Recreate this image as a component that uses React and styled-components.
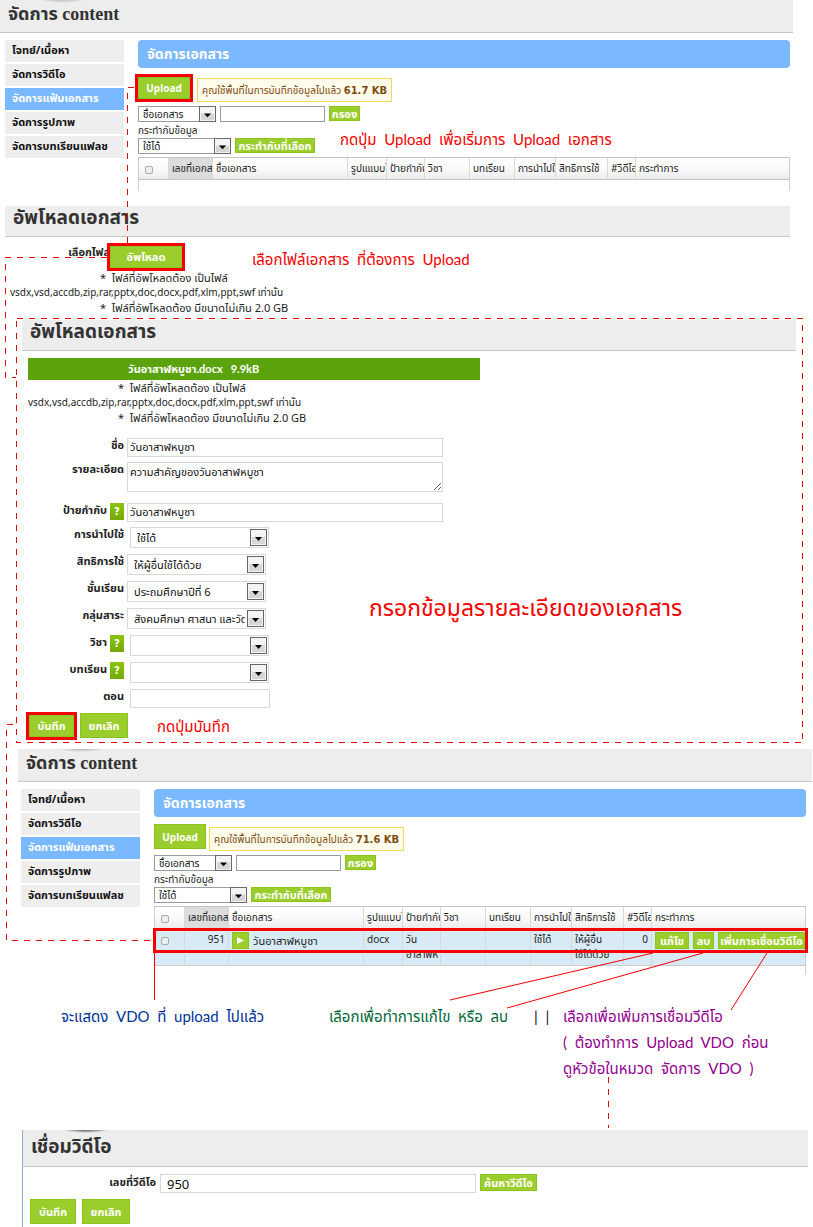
import React from 'react';
import styled, { createGlobalStyle, css } from 'styled-components';

const GlobalStyle = createGlobalStyle`
  *, *::before, *::after { box-sizing: border-box; }
  body { margin: 0; background: #fff; color: #222; font: 10px/15px "Noto Sans", "Noto Sans Thai", sans-serif; }
  button, input, select, textarea { font: inherit; color: #111; margin: 0; }
  h1, h2, p, ul { margin: 0; padding: 0; }
`;

const Page = styled.main`
  position: relative;
  overflow: hidden;
`;

const Heading = styled.h1`
  position: relative;
  overflow: hidden;
  height: ${(p) => p.$height || 31}px;
  padding: 0 8px;
  border-bottom: 1px solid #c8c8c8;
  background: #ededed;
  color: #333;
  font: bold ${(p) => p.$size || 19}px/${(p) => p.$line || 24}px "Liberation Serif", "Noto Sans Thai", serif;
  ${(p) => p.$shade && css`
    &::before {
      content: '';
      position: absolute;
      top: -6px;
      left: 38px;
      width: 50px;
      height: 9px;
      border-radius: 50%;
      background: radial-gradient(closest-side, ${p.$shade}, transparent);
    }
  `}
`;

const Manager = styled.section`
  margin: ${(p) => (p.$second ? '11px 1px 0 18px' : '0 20px 0 0')};
`;

const ManagerBody = styled.div`
  display: flex;
  align-items: flex-start;
  gap: 14px;
  padding: ${(p) => (p.$second ? '7px 6px 0 3px' : '7px 0 0 5px')};
  margin-right: ${(p) => (p.$second ? 0 : 3)}px;
`;

const Nav = styled.nav`
  flex: 0 0 119px;
  display: flex;
  flex-direction: column;
  gap: 2px;
`;

const NavLink = styled.a`
  height: 22px;
  padding: 0 7px;
  background: ${(p) => (p.$active ? '#7ab8ff' : '#eee')};
  color: ${(p) => (p.$active ? '#fff' : '#111')};
  font-size: 11px;
  font-weight: bold;
  line-height: 20px;
  text-decoration: none;
  white-space: nowrap;
`;

const Main = styled.div`
  flex: 1;
  min-width: 0;
`;

const Title = styled.h2`
  height: 28px;
  padding: 0 9px;
  border-radius: 4px;
  background: #7ab8ff;
  color: #fff;
  font-size: 14px;
  line-height: 27px;
`;

const UploadRow = styled.div`
  display: flex;
  align-items: flex-start;
  gap: 3px;
  padding-top: 7px;
`;

const Button = styled.button`
  flex: none;
  width: ${(p) => p.$width}px;
  height: ${(p) => (p.$small ? 15 : 25)}px;
  padding: 0;
  border: 1px solid #8bc41d;
  background: #9bcd2d;
  color: #fff;
  font-size: 11px;
  font-weight: bold;
  line-height: ${(p) => (p.$small ? 12 : 22)}px;
  white-space: nowrap;
  ${(p) => p.$marked && css`
    height: 22px;
    line-height: 20px;
    box-shadow: 0 0 0 3px #f60000;
  `}
`;

const UploadButton = styled(Button)`
  margin-top: ${(p) => (p.$marked ? 2 : 0)}px;
  margin-right: ${(p) => (p.$marked ? 4 : 0)}px;
  font-size: 10px;
`;

const Notice = styled.p`
  height: 24px;
  margin-top: 3px;
  padding: 0 4px;
  border: 1px solid #f0dc58;
  background: #fffceb;
  color: #7c4a10;
  line-height: 22px;
  white-space: nowrap;
  b { font: bold 10px "DejaVu Sans", sans-serif; }
`;

const FilterRow = styled.div`
  display: flex;
  align-items: flex-start;
  gap: 4px;
  height: 16px;
  margin-top: 4px;
`;

const BulkLabel = styled.p`
  height: 16px;
  line-height: 16px;
`;

const BulkRow = styled(FilterRow)`
  margin-top: 0;
`;

const PickerBox = styled.span`
  position: relative;
  flex: none;
  display: block;
  width: ${(p) => p.$width}px;
  height: ${(p) => (p.$large ? 21 : 16)}px;
`;

const PickerSelect = styled.select`
  appearance: none;
  display: block;
  width: 100%;
  height: 100%;
  padding: 0 20px 0 ${(p) => (p.$large ? 6 : 4)}px;
  border: 1px solid ${(p) => (p.$large ? '#d8d8d8' : '#9b9ba3')};
  border-radius: 0;
  background: #fff;
  font-size: ${(p) => (p.$large ? 11 : 10)}px;
`;

const Arrow = styled.svg`
  position: absolute;
  top: ${(p) => (p.$large ? 2 : 0)}px;
  right: ${(p) => (p.$large ? 2 : 0)}px;
  width: 17px;
  height: ${(p) => (p.$large ? 17 : 16)}px;
  pointer-events: none;
`;

function Picker({ label, options, width, large, id }) {
  return (
    <PickerBox $width={width} $large={large}>
      <PickerSelect id={id} aria-label={id ? undefined : label} $large={large}>
        {options.map((o) => <option key={o}>{o}</option>)}
      </PickerSelect>
      <Arrow $large={large} viewBox="0 0 17 17" preserveAspectRatio="none" aria-hidden="true">
        <rect x="0.5" y="0.5" width="16" height="16" fill="#f4f4f4" stroke="#666" />
        <rect x="2" y="8" width="13" height="7" fill="#d6d6d6" />
        <path d="M5 8h7l-3.5 4z" fill="#000" />
      </Arrow>
    </PickerBox>
  );
}

const FilterInput = styled.input`
  width: 105px;
  height: 16px;
  padding: 0 4px;
  border: 1px solid #9b9ba3;
`;

const Callout = styled.p`
  color: ${(p) => p.$color || '#f60000'};
  font-family: Lato, "Noto Sans Thai", sans-serif;
  font-size: ${(p) => (p.$big ? 23 : 15)}px;
  line-height: 26px;
  white-space: pre;
`;

const BulkCallout = styled(Callout)`
  margin: -12px 0 0 21px;
`;

const TableWrap = styled.div`
  position: relative;
  height: ${(p) => (p.$rows ? 69 : 34)}px;
  margin-top: 3px;
  border: solid #ccc;
  border-width: 0 1px;
`;

const Table = styled.table`
  width: 100%;
  table-layout: fixed;
  border-collapse: separate;
  border-spacing: 0;
  th, td {
    overflow: hidden;
    padding: 0 3px;
    border-right: 1px solid #d8d8d8;
    font-weight: normal;
    text-align: left;
    white-space: nowrap;
  }
  th:last-child, td:last-child { border-right: 0; }
  th {
    height: 23px;
    border-top: 1px solid #c4c4c4;
    border-bottom: 1px solid #c4c4c4;
    background: linear-gradient(#fff, #fafafa 50%, #ececef);
  }
  th:nth-child(2) { background: #dcdcdc; }
  td {
    height: 37px;
    padding-top: 3px;
    border-bottom: 1px solid #ccc;
    background: #d8eaf5;
    vertical-align: top;
  }
`;

const Check = styled.input`
  appearance: none;
  display: block;
  width: 8px;
  height: 8px;
  margin: ${(p) => (p.$row ? 5 : 2)}px 0 0 3px;
  border: 1px solid #aaa;
  border-radius: 2px;
  background: #eee;
`;

const NumberCell = styled.td`
  && { text-align: right; }
`;

const FileName = styled.div`
  display: flex;
  align-items: center;
  gap: 4px;
  font-size: 11px;
`;

const PlayButton = styled.button`
  display: grid;
  place-items: center;
  width: 17px;
  height: 17px;
  padding: 0;
  border: 1px solid #8bc41d;
  background: #9bcd2d;
`;

const Actions = styled.div`
  display: flex;
  gap: 4px;
`;

const ActionButton = styled(Button)`
  height: 17px;
  line-height: 14px;
`;

const RowMark = styled.div`
  position: absolute;
  top: 22px;
  left: -2px;
  right: -3px;
  height: 25px;
  border: 3px solid #f60000;
  pointer-events: none;
`;

const NAV = ['โจทย์/เนื้อหา', 'จัดการวิดีโอ', 'จัดการแฟ้มเอกสาร', 'จัดการรูปภาพ', 'จัดการบทเรียนแฟลช'];
const COLUMNS = [
  ['เลขที่เอกสาร', 44], ['ชื่อเอกสาร', 135], ['รูปแแบบไฟล์', 39], ['ป้ายกำกับ', 38], ['วิชา', 45],
  ['บทเรียน', 45], ['การนำไปใช้', 41], ['สิทธิการใช้', 52], ['#วิดีโอ', 28], ['กระทำการ'],
];

function DocumentManager({ second, used, callout }) {
  return (
    <Manager $second={second}>
      <Heading $height={33} $size={18} $line={28} $shade={second ? '#999' : '#aaa'}>จัดการ content</Heading>
      <ManagerBody $second={second}>
        <Nav>
          {NAV.map((item, i) => <NavLink key={item} href="#" $active={i === 2}>{item}</NavLink>)}
        </Nav>
        <Main>
          <Title>จัดการเอกสาร</Title>
          <UploadRow>
            <UploadButton $width={52} $marked={!second}>Upload</UploadButton>
            <Notice>คุณใช้พื้นที่ในการบันทึกข้อมูลไปแล้ว <b>{used}</b></Notice>
          </UploadRow>
          <FilterRow>
            <Picker label="ค้นจาก" options={['ชื่อเอกสาร']} width={78} />
            <FilterInput aria-label="คำค้น" />
            <Button $small $width={31}>กรอง</Button>
          </FilterRow>
          <BulkLabel>กระทำกับข้อมูล</BulkLabel>
          <BulkRow>
            <Picker label="กระทำกับข้อมูล" options={['ใช้ได้']} width={93} />
            <Button $small $width={80}>กระทำกับที่เลือก</Button>
            {callout && <BulkCallout>{callout}</BulkCallout>}
          </BulkRow>
          <TableWrap $rows={second}>
            <Table>
              <colgroup>
                <col width="30" />
                {COLUMNS.map(([name, width]) => <col key={name} width={width} />)}
              </colgroup>
              <thead>
                <tr>
                  <th><Check type="checkbox" aria-label="เลือกทั้งหมด" /></th>
                  {COLUMNS.map(([name]) => <th key={name}>{name}</th>)}
                </tr>
              </thead>
              {second && (
                <tbody>
                  <tr>
                    <td><Check $row type="checkbox" aria-label="เลือก 951" /></td>
                    <NumberCell>951</NumberCell>
                    <td>
                      <FileName>
                        <PlayButton aria-label="เปิด">
                          <svg width="7" height="7" viewBox="0 0 7 7"><path d="M0 0L7 3.5L0 7z" fill="#fff" /></svg>
                        </PlayButton>
                        วันอาสาฬหบูชา
                      </FileName>
                    </td>
                    <td>docx</td>
                    <td>วัน<br />อาสาฬห</td>
                    <td />
                    <td />
                    <td>ใช้ได้</td>
                    <td>ให้ผู้อื่น<br />ใช้ได้ด้วย</td>
                    <NumberCell>0</NumberCell>
                    <td>
                      <Actions>
                        <ActionButton $width={34}>แก้ไข</ActionButton>
                        <ActionButton $width={21}>ลบ</ActionButton>
                        <ActionButton $width={87}>เพิ่มการเชื่อมวิดีโอ</ActionButton>
                      </Actions>
                    </td>
                  </tr>
                </tbody>
              )}
            </Table>
            {second && <RowMark />}
          </TableWrap>
        </Main>
      </ManagerBody>
    </Manager>
  );
}

const ChooseSection = styled.section`
  margin: 15px 23px 0 5px;
`;

const ChooseRow = styled.div`
  display: flex;
  align-items: flex-start;
  padding: 9px 0 0 5px;
  height: 33px;
`;

const ChooseLabel = styled.label`
  flex: 0 0 100px;
  font-size: 11px;
  font-weight: bold;
  text-align: right;
  line-height: 12px;
`;

const ChooseCallout = styled(Callout)`
  margin-left: 70px;
`;

const NoteList = styled.ul`
  list-style: none;
  padding-left: ${(p) => p.$inset}px;
  white-space: pre;
`;

const Note = styled.li`
  padding-left: ${(p) => (p.$star ? 90 : 0)}px;
  font-size: ${(p) => (p.$star ? 11 : 10)}px;
`;

function FileNotes({ inset }) {
  return (
    <NoteList $inset={inset}>
      <Note $star>*  ไฟล์ที่อัพโหลดต้อง เป็นไฟล์</Note>
      <Note>vsdx,vsd,accdb,zip,rar,pptx,doc,docx,pdf,xlm,ppt,swf เท่านั้น</Note>
      <Note $star>*  ไฟล์ที่อัพโหลดต้อง มีขนาดไม่เกิน 2.0 GB</Note>
    </NoteList>
  );
}

const DetailSection = styled.section`
  position: relative;
  margin: 5px 17px 0 22px;
`;

const FileBar = styled.div`
  width: 452px;
  height: 22px;
  margin: 7px 0 0 6px;
  padding-left: 100px;
  background: #5ba30d;
  color: #fff;
  font: bold 11px/22px Lato, "Noto Sans Thai", sans-serif;
  white-space: pre;
`;

const Form = styled.form`
  display: flex;
  flex-direction: column;
  gap: 5px;
  margin-top: 13px;
`;

const Field = styled.div`
  display: flex;
  align-items: flex-start;
  min-height: ${(p) => (p.$tall ? 36 : 19)}px;
`;

const FieldLabel = styled.label`
  flex: 0 0 102px;
  display: flex;
  justify-content: flex-end;
  align-items: flex-start;
  gap: 3px;
  margin-right: ${(p) => (p.$wide ? 6 : 3)}px;
  font-size: 11px;
  font-weight: bold;
  line-height: 14px;
`;

const Help = styled.span`
  width: 14px;
  height: 17px;
  background: linear-gradient(#8cc40a, #75a80a);
  color: #fff;
  font: bold 10px/17px "DejaVu Sans", sans-serif;
  text-align: center;
`;

const TextInput = styled.input`
  width: ${(p) => p.$width || 316}px;
  height: 19px;
  padding: 0 2px;
  border: 1px solid #d8d8d8;
  font-size: 11px;
`;

const TextArea = styled.textarea`
  width: 316px;
  height: 30px;
  padding: 1px 2px;
  border: 1px solid #d8d8d8;
  font-size: 11px;
`;

const FIELDS = [
  { id: 'name', label: 'ชื่อ', value: 'วันอาสาฬหบูชา' },
  { id: 'detail', label: 'รายละเอียด', value: 'ความสำคัญของวันอาสาฬหบูชา', area: true },
  { id: 'tags', label: 'ป้ายกำกับ', value: 'วันอาสาฬหบูชา', help: true },
  { id: 'usage', label: 'การนำไปใช้', pick: 'ใช้ได้', wide: true },
  { id: 'rights', label: 'สิทธิการใช้', pick: 'ให้ผู้อื่นใช้ได้ด้วย' },
  { id: 'grade', label: 'ชั้นเรียน', pick: 'ประถมศึกษาปีที่ 6' },
  { id: 'group', label: 'กลุ่มสาระ', pick: 'สังคมศึกษา ศาสนา และวัฒนธรรม' },
  { id: 'subject', label: 'วิชา', pick: '', wide: true, help: true },
  { id: 'lesson', label: 'บทเรียน', pick: '', wide: true, help: true },
  { id: 'part', label: 'ตอน', value: '', wide: true, width: 140 },
];

const PickField = styled(Field)`
  min-height: 22px;
`;

function FormField({ id, label, value, pick, area, help, wide, width }) {
  const Row = pick === undefined ? Field : PickField;
  return (
    <Row $tall={area}>
      <FieldLabel htmlFor={id} $wide={wide}>{label}{help && <Help>?</Help>}</FieldLabel>
      {pick !== undefined && <Picker id={id} options={[pick]} width={139} large />}
      {pick === undefined && area && <TextArea id={id} defaultValue={value} />}
      {pick === undefined && !area && <TextInput id={id} defaultValue={value} $width={width} />}
    </Row>
  );
}

const ButtonRow = styled.div`
  display: flex;
  align-items: center;
  gap: 6px;
  height: 25px;
  padding-left: 7px;
`;

const LinkButtonRow = styled(ButtonRow)`
  margin-top: 6px;
`;

const SaveCallout = styled(Callout)`
  margin-left: 23px;
`;

const FormCallout = styled(Callout)`
  position: absolute;
  top: 274px;
  left: 347px;
`;

const Legend = styled.section`
  display: grid;
  grid-template-columns: 268px 205px 29px 1fr;
  margin: 28px 0 0 61px;
`;

const LinkSection = styled.section`
  margin: 49px 5px 0 22px;
  padding-bottom: 4px;
  border-left: 1px solid #8fb0cc;
`;

const LinkRow = styled.div`
  display: flex;
  align-items: flex-start;
  gap: 4px;
  margin-top: 7px;
`;

const LinkLabel = styled.label`
  flex: 0 0 133px;
  font-size: 11px;
  font-weight: bold;
  text-align: right;
`;

const LinkInput = styled(TextInput)`
  padding: 0 6px;
  font-size: 13px;
`;

const Overlay = styled.svg`
  position: absolute;
  top: 0;
  left: 0;
  pointer-events: none;
`;

function Connectors() {
  return (
    <Overlay width="813" height="1227" fill="none" stroke="#f00000" aria-hidden="true">
      <g strokeDasharray="6 6" shapeRendering="crispEdges">
        <path d="M127.5 243V87.5H135" />
        <path d="M107 257.5H5.5V377.5H16" />
        <path d="M16.5 318.5H802.5V742.5H16.5z" />
        <path d="M13 724.5H6.5V940.5H154" />
        <path d="M608.5 1077V1128" />
      </g>
      <path d="M154.5 953V1000" />
      <path d="M653 953L450 1000M703 953L507 1008M767 953L731 1010" />
    </Overlay>
  );
}

export default function App() {
  return (
    <>
      <GlobalStyle />
      <Page>
        <DocumentManager used="61.7 KB" callout="กดปุ่ม  Upload  เพื่อเริ่มการ  Upload  เอกสาร" />

        <ChooseSection>
          <Heading>อัพโหลดเอกสาร</Heading>
          <ChooseRow>
            <ChooseLabel htmlFor="choose">เลือกไฟล์</ChooseLabel>
            <Button id="choose" $marked $width={72}>อัพโหลด</Button>
            <ChooseCallout>เลือกไฟล์เอกสาร  ที่ต้องการ  Upload</ChooseCallout>
          </ChooseRow>
          <FileNotes inset={5} />
        </ChooseSection>

        <DetailSection>
          <Heading>อัพโหลดเอกสาร</Heading>
          <FileBar>วันอาสาฬหบูชา.docx   9.9kB</FileBar>
          <FileNotes inset={6} />
          <Form onSubmit={(e) => e.preventDefault()}>
            {FIELDS.map((f) => <FormField key={f.id} {...f} />)}
            <ButtonRow>
              <Button $marked $width={45}>บันทึก</Button>
              <Button $width={48}>ยกเลิก</Button>
              <SaveCallout>กดปุ่มบันทึก</SaveCallout>
            </ButtonRow>
          </Form>
          <FormCallout $big>กรอกข้อมูลรายละเอียดของเอกสาร</FormCallout>
        </DetailSection>

        <DocumentManager second used="71.6 KB" />

        <Legend>
          <Callout $color="#003399">จะแสดง  VDO  ที่  upload  ไปแล้ว</Callout>
          <Callout $color="#006837">เลือกเพื่อทำการแก้ไข  หรือ  ลบ</Callout>
          <Callout $color="#111">|  |</Callout>
          <Callout $color="#93008f">{'เลือกเพื่อเพิ่มการเชื่อมวีดีโอ\n(  ต้องทำการ  Upload  VDO  ก่อน\nดูหัวข้อในหมวด  จัดการ  VDO  )'}</Callout>
        </Legend>

        <LinkSection>
          <Heading $height={37} $line={34} $shade="#222">เชื่อมวิดีโอ</Heading>
          <LinkRow>
            <LinkLabel htmlFor="video">เลขที่วีดีโอ</LinkLabel>
            <LinkInput id="video" defaultValue="950" />
            <ActionButton $width={57}>ค้นหาวีดีโอ</ActionButton>
          </LinkRow>
          <LinkButtonRow>
            <Button $width={46}>บันทึก</Button>
            <Button $width={48}>ยกเลิก</Button>
          </LinkButtonRow>
        </LinkSection>
        <Connectors />
      </Page>
    </>
  );
}
